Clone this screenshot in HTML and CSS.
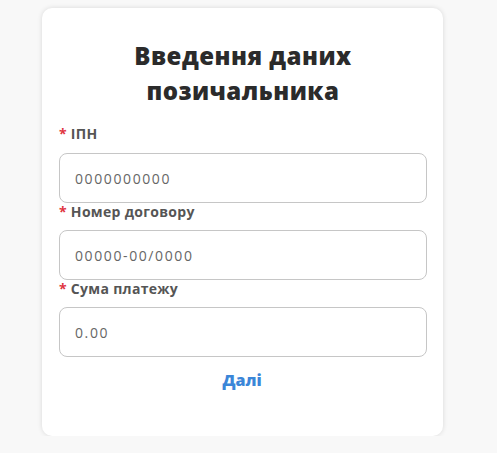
FILE: index.html
```html
<!DOCTYPE html>
<html lang="uk">
<head>
<meta charset="utf-8">
<title>Введення даних позичальника</title>
<link rel="stylesheet" href="styles.css">
</head>
<body>
<main class="page">
  <form class="card">
    <h1 class="title">Введення даних позичальника</h1>
    <div class="field">
      <label class="label" for="ipn"><span class="req">*</span> ІПН</label>
      <input class="input" id="ipn" type="text" placeholder="0000000000">
    </div>
    <div class="field">
      <label class="label" for="contract"><span class="req">*</span> Номер договору</label>
      <input class="input" id="contract" type="text" placeholder="00000-00/0000">
    </div>
    <div class="field">
      <label class="label" for="sum"><span class="req">*</span> Сума платежу</label>
      <input class="input" id="sum" type="text" placeholder="0.00">
    </div>
    <button class="next" type="button">Далі</button>
  </form>
</main>
</body>
</html>
```

FILE: styles.css
```css
html, body {
  margin: 0;
  padding: 0;
  background: #f8f8f8;
  font-family: "Open Sans", "Liberation Sans", sans-serif;
}

.page {
  padding: 8px 0 0 42px;
}

.card {
  box-sizing: border-box;
  width: 401px;
  height: 428px;
  background: #ffffff;
  border-radius: 10px;
  box-shadow: 0 0 5px rgba(0, 0, 0, 0.13);
  padding: 30px 16px 0 17px;
  display: flex;
  flex-direction: column;
}

.title {
  margin: 0 0 17px;
  text-align: center;
  font-size: 24px;
  line-height: 35px;
  font-weight: 800;
  color: #2b2b2b;
  padding: 0 40px;
  letter-spacing: 0.5px;
}

.field {
  display: flex;
  flex-direction: column;
}

.label {
  font-size: 14px;
  line-height: 17px;
  font-weight: 700;
  color: #555555;
  margin: 0 0 11px;
  letter-spacing: 0.3px;
}

.field + .field .label {
  margin-bottom: 10px;
}

.req {
  color: #e0353f;
}

.input {
  box-sizing: border-box;
  height: 50px;
  width: 368px;
  border: 1px solid #c6c6c6;
  border-radius: 8px;
  padding: 0 15px;
  font-family: inherit;
  font-size: 14px;
  letter-spacing: 1.6px;
  color: #333;
  background: #fff;
  outline: none;
}

.input::placeholder {
  color: #666666;
}

.next {
  align-self: center;
  margin-top: 13px;
  border: 0;
  background: none;
  padding: 0;
  font-family: inherit;
  font-size: 16px;
  line-height: 20px;
  font-weight: 800;
  color: #3b86d8;
  cursor: pointer;
  margin-left: -2px;
}
```
